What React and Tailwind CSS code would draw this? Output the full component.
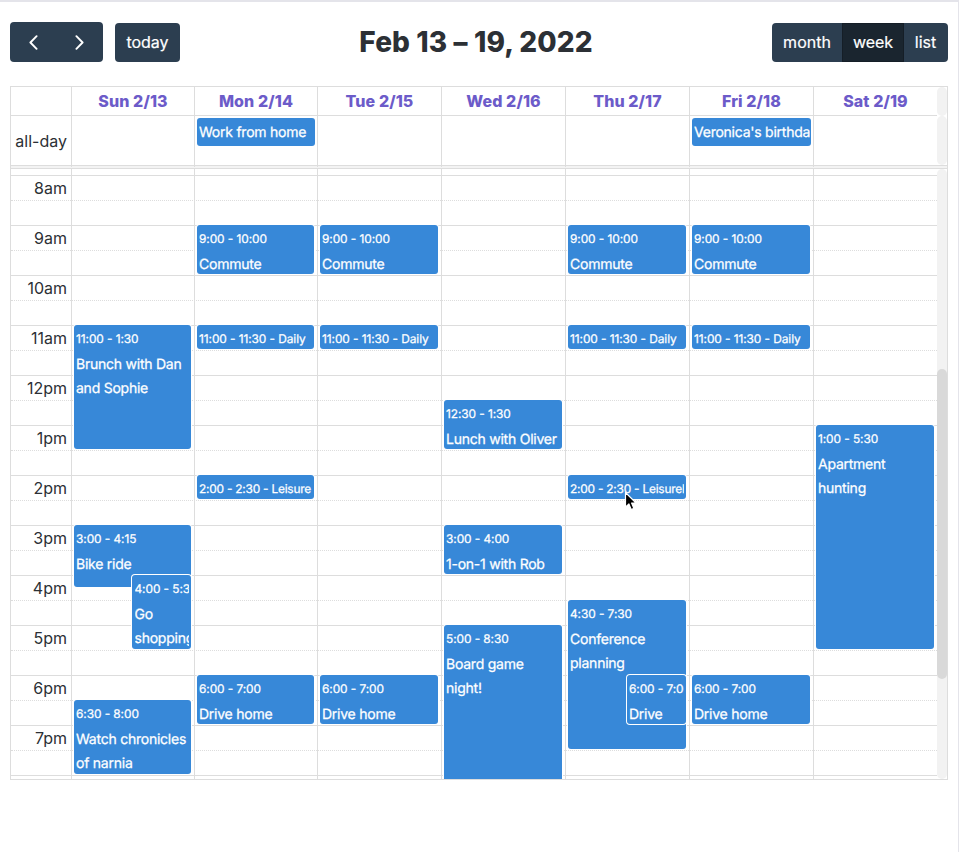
const HEADERS = ["Sun 2/13", "Mon 2/14", "Tue 2/15", "Wed 2/16", "Thu 2/17", "Fri 2/18", "Sat 2/19"];
const COLS = "grid grid-cols-[60px_123px_123px_124px_124px_124px_124px_124px]";
const HOURS = ["8am", "9am", "10am", "11am", "12pm", "1pm", "2pm", "3pm", "4pm", "5pm", "6pm", "7pm"];
const ALL_DAY = { 1: "Work from home", 5: "Veronica's birthday" };

// start and end are hours on a 24h clock
const EVENTS = [
  [
    { start: 11, end: 13.5, time: "11:00 - 1:30", title: "Brunch with Dan and Sophie" },
    { start: 15, end: 16.25, time: "3:00 - 4:15", title: "Bike ride" },
    { start: 16, end: 17.5, time: "4:00 - 5:30", title: "Go shopping", inset: "ml-[60px] pl-[2.5px]" },
    { start: 18.5, end: 20, time: "6:30 - 8:00", title: "Watch chronicles of narnia" },
  ],
  [
    { start: 9, end: 10, time: "9:00 - 10:00", title: "Commute" },
    { start: 11, end: 11.5, time: "11:00 - 11:30", title: "Daily" },
    { start: 14, end: 14.5, time: "2:00 - 2:30", title: "Leisure", tight: true },
    { start: 18, end: 19, time: "6:00 - 7:00", title: "Drive home" },
  ],
  [
    { start: 9, end: 10, time: "9:00 - 10:00", title: "Commute" },
    { start: 11, end: 11.5, time: "11:00 - 11:30", title: "Daily" },
    { start: 18, end: 19, time: "6:00 - 7:00", title: "Drive home" },
  ],
  [
    { start: 12.5, end: 13.5, time: "12:30 - 1:30", title: "Lunch with Oliver" },
    { start: 15, end: 16, time: "3:00 - 4:00", title: "1-on-1 with Rob" },
    { start: 17, end: 20.5, time: "5:00 - 8:30", title: "Board game night!" },
  ],
  [
    { start: 9, end: 10, time: "9:00 - 10:00", title: "Commute" },
    { start: 11, end: 11.5, time: "11:00 - 11:30", title: "Daily" },
    { start: 14, end: 14.5, time: "2:00 - 2:30", title: "Leisurely", tight: true },
    { start: 16.5, end: 19.5, time: "4:30 - 7:30", title: "Conference planning" },
    { start: 18, end: 19, time: "6:00 - 7:00", title: "Drive home", inset: "ml-[61px] pl-[2px]" },
  ],
  [
    { start: 9, end: 10, time: "9:00 - 10:00", title: "Commute" },
    { start: 11, end: 11.5, time: "11:00 - 11:30", title: "Daily" },
    { start: 18, end: 19, time: "6:00 - 7:00", title: "Drive home" },
  ],
  [{ start: 13, end: 17.5, time: "1:00 - 5:30", title: "Apartment hunting" }],
];

// one grid row per quarter of an hour, counted from 8am
const row = (hour) => (hour - 8) * 4 + 1;

function Event({ event }) {
  const short = event.end - event.start <= 0.5;
  return (
    <div
      className={
        "col-start-1 mb-px mr-[3px] overflow-hidden rounded-[3px] bg-[#3788d8] pr-[2px] text-white shadow-[0_0_0_1px_#fff] " +
        (event.inset || "ml-[2px] pl-[2px]")
      }
      style={{ gridRow: `${row(event.start)} / ${row(event.end)}` }}
    >
      <div className="overflow-hidden">
        <div
          className={
            "mt-[2px] whitespace-nowrap text-[11.9px] leading-6 [-webkit-text-stroke:0.25px] [text-rendering:geometricPrecision] " +
            (event.tight ? "tracking-[-0.22px]" : "tracking-[-0.07px]")
          }
        >
          {event.time}
          {short && ` - ${event.title}`}
        </div>
        {!short && (
          <div className="mt-[2px] text-[14px] leading-6 tracking-[-0.24px] [-webkit-text-stroke:0.25px] [text-rendering:geometricPrecision]">
            {event.title}
          </div>
        )}
      </div>
    </div>
  );
}

function Toolbar() {
  return (
    <div className="mt-5 flex h-10 items-center justify-between">
      <div className="flex items-center gap-3">
        <div className="flex h-10 w-[93px] items-center justify-between rounded bg-[#2c3e50] px-[18px]">
          {["M7.6 1.2 L1.4 7.5 L7.6 13.8", "M1.4 1.2 L7.6 7.5 L1.4 13.8"].map((d) => (
            <button key={d} className="px-px pt-px">
              <svg width="9" height="15" viewBox="0 0 9 15" fill="none" stroke="#fff" strokeWidth="1.9" strokeLinecap="round" strokeLinejoin="round">
                <path d={d} />
              </svg>
            </button>
          ))}
        </div>
        <button className="mt-px h-[39px] w-[65px] rounded bg-[#2c3e50] pb-0.5 text-[16px] text-white [-webkit-text-stroke:0.2px]">today</button>
      </div>
      <h2 className="text-[28px] font-extrabold leading-none tracking-[0.12px]">Feb 13 – 19, 2022</h2>
      <div className="mt-px flex h-[39px] overflow-hidden rounded bg-[#2c3e50] text-[16px] text-white [-webkit-text-stroke:0.2px]">
        <button className="w-[70px] pb-0.5">month</button>
        <button className="w-[62px] border border-[#151e27] bg-[#1a252f] pb-0.5">week</button>
        <button className="w-[44px] pb-0.5 pr-px">list</button>
      </div>
    </div>
  );
}

function TimeGrid() {
  return (
    <div className="grid h-[610px] grid-cols-[926px_10px] overflow-hidden">
      <div className="col-start-1 row-start-1 h-[610px] overflow-hidden">
        <div className="h-[6px]" />
        {HOURS.map((hour) => (
          <div key={hour}>
            <div className="h-[25px] border-t border-[#ddd]">
              <div className="w-14 text-right text-[16px] leading-[25px]">{hour}</div>
            </div>
            <div className="h-[25px] border-t border-dotted border-[#ddd]" />
          </div>
        ))}
        <div className="h-[25px] border-t border-[#ddd]" />
      </div>
      <div className={"col-start-1 row-start-1 h-[610px] overflow-hidden " + COLS}>
        <div />
        {EVENTS.map((events, day) => (
          <div key={day} className="border-l border-[#ddd] pt-[6px]">
            <div className="grid auto-rows-[12.5px] grid-cols-1">
              {events.map((event) => (
                <Event key={event.time} event={event} />
              ))}
            </div>
          </div>
        ))}
      </div>
      <div className="col-start-2 row-start-1 rounded-full bg-[#f2f2f2] pt-[200px]">
        <div className="h-[310px] rounded-full bg-[#d9d9d9]" />
      </div>
    </div>
  );
}

export default function App() {
  return (
    <div className="relative h-[852px] w-[960px] overflow-hidden bg-white font-['Inter',sans-serif] text-[#2c3035]">
      <div className="h-[852px] w-[959px] border-r border-t-2 border-[#e4e4ea] pl-[10px] pr-[10px]">
        <Toolbar />
        <div className="mt-6 w-[938px] border border-[#ddd]">
          <div className="flex">
            <div className={"h-[29px] border-b border-[#ddd] text-center text-[16px] font-extrabold leading-[28px] tracking-[0.1px] text-[#6c5bc9] " + COLS}>
              <div />
              {HEADERS.map((label) => (
                <div key={label} className="border-l border-[#ddd]">{label}</div>
              ))}
            </div>
            <div className="h-[29px] w-[10px] rounded-full bg-[#f2f2f2]" />
          </div>
          <div className="flex border-b border-[#ddd]">
            <div className={"h-[49px] " + COLS}>
              <div className="pr-1 text-right text-[16px] leading-[51px]">all-day</div>
              {HEADERS.map((label, day) => (
                <div key={label} className="border-l border-[#ddd] pl-[2px] pr-[2px] pt-[2px]">
                  {ALL_DAY[day] && (
                    <div className="h-7 overflow-hidden whitespace-nowrap rounded-[3px] bg-[#3788d8] pl-[2px] pr-px text-[14px] leading-[30px] tracking-[-0.24px] text-white [-webkit-text-stroke:0.25px] [text-rendering:geometricPrecision]">
                      <div className="overflow-hidden">{ALL_DAY[day]}</div>
                    </div>
                  )}
                </div>
              ))}
            </div>
            <div className="h-[49px] w-[10px] rounded-full bg-[#f2f2f2]" />
          </div>
          <div className="h-[3px] border-b border-[#ddd] bg-[#f3f3f3]" />
          <TimeGrid />
        </div>
      </div>
      <svg className="absolute left-[624px] top-[491px]" width="14" height="21" viewBox="0 0 14 21">
        <path d="M1.5 1.5 V16.2 L4.9 13 L7.2 18.5 L9.9 17.4 L7.6 12 H12 Z" fill="#000" stroke="#fff" strokeWidth="1.2" strokeLinejoin="round" />
      </svg>
    </div>
  );
}
